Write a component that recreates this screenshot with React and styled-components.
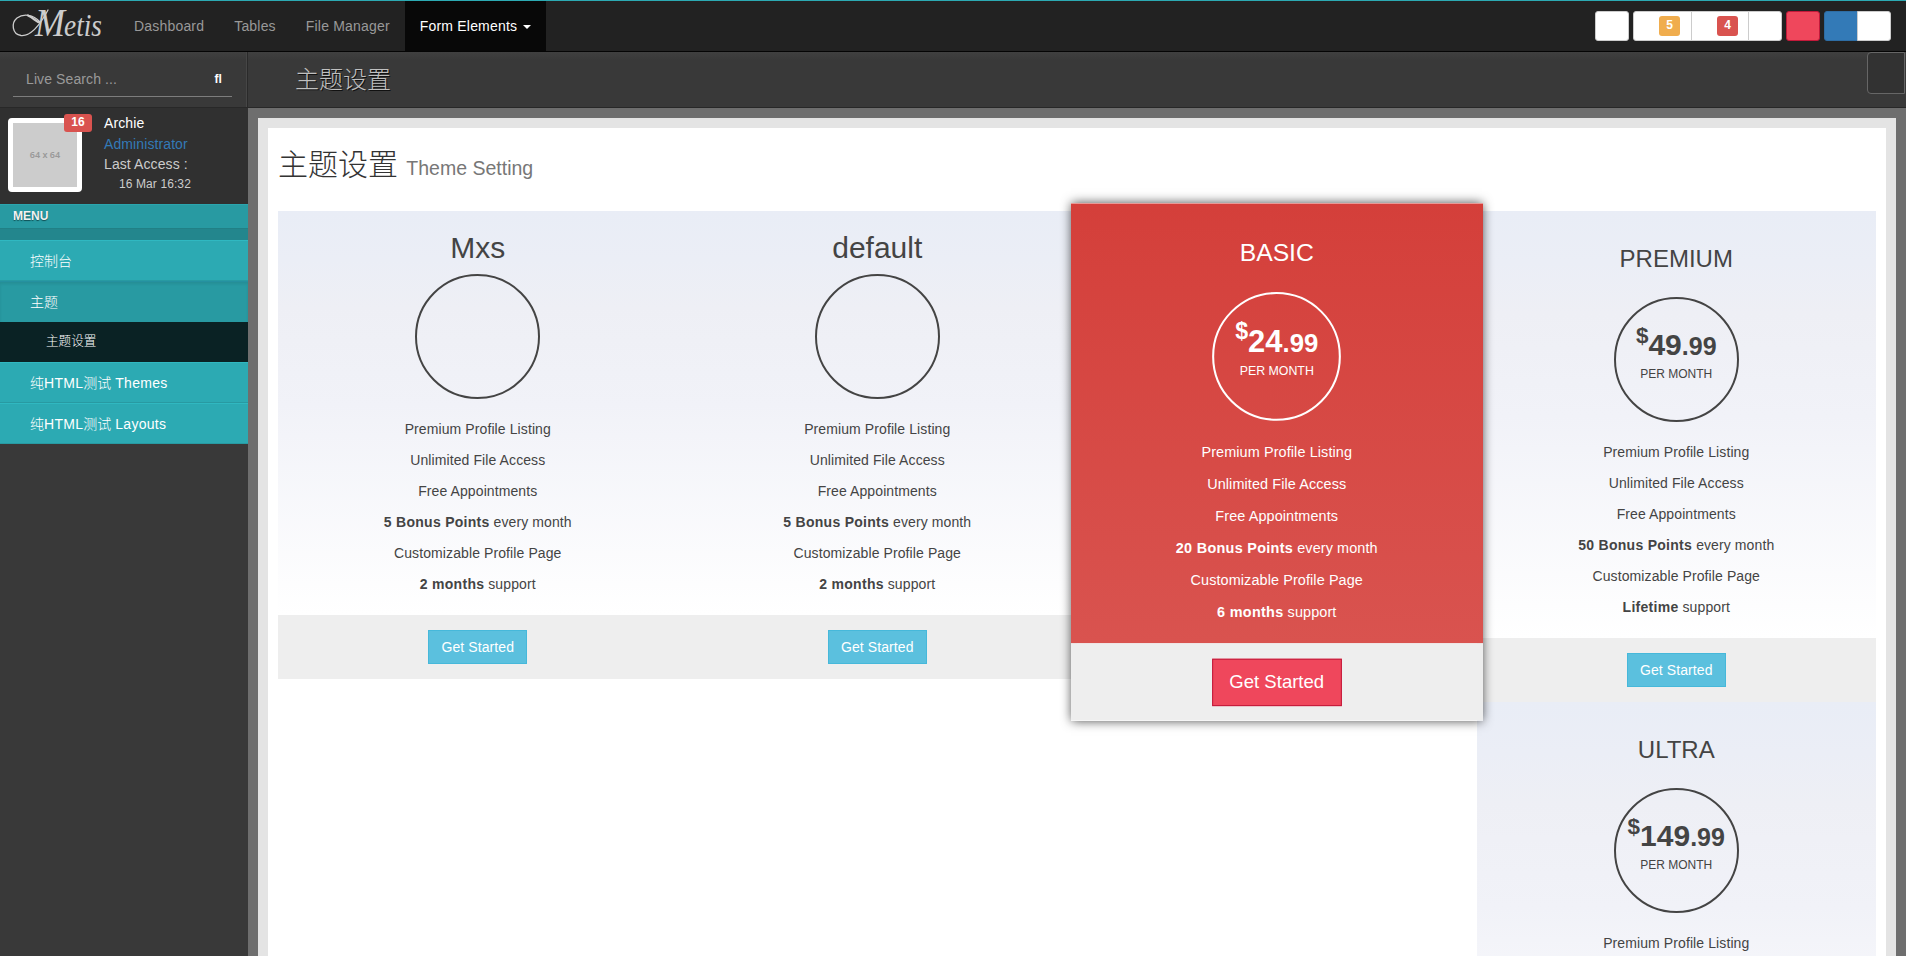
import React from "react";
import styled, { createGlobalStyle, css } from "styled-components";

const Global = createGlobalStyle`
  *, *::before, *::after { box-sizing: border-box; }
  html, body { margin: 0; background: #fff; }
  body {
    height: 956px;
    overflow: hidden;
    font: 14px/20px "Liberation Sans", Arial, "Noto Sans CJK SC", sans-serif;
    color: #444;
  }
`;

const Page = styled.div`
  width: 1906px;
  height: 956px;
  overflow: hidden;
  display: flex;
  flex-direction: column;
`;

/* ---------- top bar ---------- */
const NavBar = styled.nav`
  height: 52px;
  flex: none;
  display: flex;
  align-items: flex-start;
  background: #222;
  border-top: 1px solid #2caab3;
  border-bottom: 1px solid #050505;
`;

const Brand = styled.a`
  width: 119px;
  height: 50px;
  display: block;
`;

const NavItem = styled.a`
  height: 50px;
  padding: 15px;
  letter-spacing: 0.19px;
  white-space: nowrap;
  color: ${(p) => (p.$active ? "#fff" : "#999")};
  background: ${(p) => (p.$active ? "#080808" : "transparent")};
`;

const Caret = styled.span`
  display: inline-block;
  margin-left: 6px;
  vertical-align: middle;
  border-top: 4px solid currentColor;
  border-left: 4px solid transparent;
  border-right: 4px solid transparent;
`;

const Tools = styled.div`
  margin: 10px 15px 0 auto;
  display: flex;
  gap: 4px;
`;

const ToolGroup = styled.div`
  display: flex;
`;

const tones = {
  plain: ["#fff", "#ccc"],
  metis: ["#ef475c", "#c3193a"],
  primary: ["#337ab7", "#2e6da4"],
};

const ToolButton = styled.button`
  width: ${(p) => p.$w || 34}px;
  height: 30px;
  padding: 0;
  display: flex;
  align-items: center;
  justify-content: flex-end;
  border: 1px solid ${(p) => tones[p.$tone || "plain"][1]};
  background: ${(p) => tones[p.$tone || "plain"][0]};
  & + & { margin-left: -1px; }
  &:first-child { border-radius: 3px 0 0 3px; }
  &:last-child { border-radius: 0 3px 3px 0; }
  &:only-child { border-radius: 3px; }
`;

const Count = styled.span`
  width: 21px;
  height: 20px;
  margin-right: ${(p) => p.$gap}px;
  border-radius: 3px;
  font: bold 12px/18px "Liberation Sans", Arial, sans-serif;
  text-align: center;
  color: #fff;
  background: ${(p) => p.$color};
`;

/* ---------- header row ---------- */
const HeadRow = styled.header`
  height: 56px;
  flex: none;
  display: flex;
  align-items: flex-start;
  background: linear-gradient(#404040 0, #393939 8px, #393939 100%);
  border-bottom: 1px solid #282828;
`;

const SearchArea = styled.div`
  width: 248px;
  height: 55px;
  padding: 12px 15px 0 13px;
  border-right: 1px solid #2a2a2a;
  box-shadow: inset -1px 0 #464646;
`;

const SearchBox = styled.div`
  height: 33px;
  padding: 0 10px 0 13px;
  display: flex;
  justify-content: space-between;
  border-bottom: 1px solid #7d7d7d;
  line-height: 31px;
  letter-spacing: 0.1px;
  color: #999;
`;

const SearchGlyph = styled.span`
  font-size: 12px;
  line-height: 30px;
  font-weight: bold;
  color: #fff;
`;

const HeadTitle = styled.h3`
  margin: 0;
  padding: 15px 0 0 47px;
  font: 300 24px/26px "Liberation Sans", "Noto Sans CJK SC", sans-serif;
  color: #c0c0c0;
  text-shadow: 1px 1px 0 #111;
`;

const PanelToggle = styled.button`
  width: 38px;
  height: 42px;
  padding: 0;
  margin: 0 1px 0 auto;
  border: 1px solid #666;
  border-radius: 4px 0 0 4px;
  background: #323232;
`;

/* ---------- sidebar ---------- */
const Main = styled.div`
  flex: 1;
  min-height: 0;
  display: flex;
  background: #6e6e6e;
`;

const SideBar = styled.aside`
  width: 248px;
  flex: none;
  background: #393939;
`;

const UserPanel = styled.div`
  height: 96px;
  padding: 10px 8px 0;
  display: flex;
  gap: 22px;
  background: #303030;
`;

const Avatar = styled.div`
  position: relative;
  width: 74px;
  height: 74px;
  display: flex;
  align-items: center;
  justify-content: center;
  border: 5px solid #fff;
  border-radius: 4px;
  background: #ccc;
  font: 600 9px/12px "Noto Sans", sans-serif;
  color: #999;
`;

const AvatarBadge = styled.span`
  position: absolute;
  top: -9px;
  right: -15px;
  width: 28px;
  height: 18px;
  border-radius: 3px;
  background: #d9534f;
  font: bold 12px/16px "Liberation Sans", Arial, sans-serif;
  text-align: center;
  color: #fff;
`;

const UserInfo = styled.div`
  margin-top: -6px;
  line-height: 19px;
  letter-spacing: 0.1px;
  color: #ccc;
`;
const UserName = styled.div`
  line-height: 22px;
  color: #fff;
`;
const UserRole = styled.div`
  line-height: 21px;
  color: #337ab7;
`;
const AccessTime = styled.div`
  padding-left: 15px;
  font-size: 12px;
  line-height: 21px;
`;

const MenuHeader = styled.div`
  height: 24px;
  padding-left: 13px;
  border-top: 1px solid #2ba5ae;
  background: #289aa2;
  font-size: 12px;
  font-weight: bold;
  line-height: 22px;
  color: #f2f2f2;
  text-shadow: 0 1px 1px #0f4d51;
`;

const MenuDivider = styled.div`
  height: 12px;
  background: #23868d;
  box-shadow: inset 0 1px #218086;
`;

const menuKinds = {
  item: css`
    background: #2caab3;
    border-top: 1px solid #30b8c1;
    border-bottom: 1px solid #289aa2;
  `,
  open: css`
    background: #289aa2;
    border-top: 1px solid #2591a0;
    box-shadow: inset 0 2px 3px rgba(0, 0, 0, 0.08);
  `,
  sub: css`
    height: 40px;
    padding-left: 46px;
    font-size: 12.6px;
    line-height: 38px;
    background: #0a2224;
  `,
};

const MenuLink = styled.a`
  display: block;
  height: 41px;
  padding-left: 30px;
  font-weight: 300;
  line-height: 40px;
  white-space: nowrap;
  color: #fff;
  ${(p) => menuKinds[p.$kind || "item"]}
`;

const Latin = styled.span`
  letter-spacing: 0.3px;
`;

/* ---------- content ---------- */
const Content = styled.main`
  flex: 1;
  min-width: 0;
  margin: 10px 10px 0;
  border: solid #e4e4e4;
  border-width: 10px 10px 0;
  padding: 0 10px;
  background: #fff;
`;

const PageTitle = styled.h2`
  height: 83px;
  margin: 0;
  padding-top: 18px;
  font: 300 30px/38px "Liberation Sans", "Noto Sans CJK SC", sans-serif;
  color: #333;
`;

const TitleNote = styled.small`
  font-size: 19.5px;
  font-weight: 400;
  color: #777;
`;

const Plans = styled.section`
  display: grid;
  grid-template-columns: repeat(4, 1fr);
  align-items: start;
`;

const PlanColumn = styled.div`
  display: flex;
  flex-direction: column;
`;

const PlanCard = styled.article`
  text-align: center;
  color: ${(p) => (p.$featured ? "#fff" : "#444")};
  ${(p) =>
    p.$featured &&
    css`
      z-index: 1;
      transform: scale(1.03);
      box-shadow: 0 0 10px rgba(0, 0, 0, 0.7);
    `}
`;

const PlanBody = styled.div`
  padding: ${(p) => (p.$tall ? "35px" : "20px")} 0 15px;
  background: ${(p) =>
    p.$featured
      ? "linear-gradient(#d43f3a, #d9534f)"
      : "linear-gradient(#e9edf6 0, #ebeef6 12%, #eeeff5 24%, #f1f2f8 48%, #fff 100%)"};
`;

const ThemeName = styled.h2`
  margin: 0 0 10px;
  font-size: 30px;
  line-height: 33px;
  font-weight: 400;
`;

const PlanName = styled.h3`
  margin: 0 0 25px;
  font-size: 24px;
  line-height: 26px;
  font-weight: 400;
  text-transform: uppercase;
`;

const PriceCircle = styled.div`
  width: 125px;
  height: 125px;
  margin: 0 auto 15px;
  padding-top: 28.5px;
  border: 2px solid currentColor;
  border-radius: 50%;
`;

const Price = styled.div`
  margin-bottom: 3px;
  font-size: 30px;
  line-height: 33px;
  font-weight: bold;
  white-space: nowrap;
`;
const Currency = styled.sup`
  position: relative;
  top: -0.5em;
  font-size: 22.5px;
  line-height: 0;
  vertical-align: baseline;
`;
const Cents = styled.small`
  font-size: 25px;
`;
const Period = styled.div`
  font-size: 12px;
  line-height: 17px;
`;

const Features = styled.ul`
  margin: 0;
  padding: 0;
  list-style: none;
`;
const Feature = styled.li`
  height: 31px;
  line-height: 31px;
  letter-spacing: 0.1px;

  strong {
    letter-spacing: 0.28px;
  }
`;

const PlanFooter = styled.div`
  padding: ${(p) => (p.$featured ? "14.5px" : "15px")} 0;
  display: flex;
  justify-content: center;
  background: #eee;
`;

const StartButton = styled.button`
  border: 1px solid #46b8da;
  padding: 6px 12px;
  background: #5bc0de;
  font: 14px/20px "Liberation Sans", Arial, sans-serif;
  letter-spacing: 0.1px;
  color: #fff;
  ${(p) =>
    p.$featured &&
    css`
      padding: 9px 16px 11px;
      border-color: #c3193a;
      background: #ef475c;
      font-size: 18px;
      line-height: 24px;
      letter-spacing: 0;
    `}
`;

function Plan({ theme, name, amount, bonus, support, featured }) {
  return (
    <PlanCard $featured={featured}>
      <PlanBody $featured={featured} $tall={!theme}>
        {theme ? <ThemeName>{theme}</ThemeName> : <PlanName>{name}</PlanName>}
        <PriceCircle>
          {amount && (
            <>
              <Price>
                <Currency>$</Currency>
                {amount}
                <Cents>.99</Cents>
              </Price>
              <Period>PER MONTH</Period>
            </>
          )}
        </PriceCircle>
        <Features>
          <Feature>Premium Profile Listing</Feature>
          <Feature>Unlimited File Access</Feature>
          <Feature>Free Appointments</Feature>
          <Feature>
            <strong>{bonus} Bonus Points</strong> every month
          </Feature>
          <Feature>Customizable Profile Page</Feature>
          <Feature>
            <strong>{support}</strong> support
          </Feature>
        </Features>
      </PlanBody>
      <PlanFooter $featured={featured}>
        <StartButton $featured={featured}>Get Started</StartButton>
      </PlanFooter>
    </PlanCard>
  );
}

function Logo() {
  return (
    <svg width="119" height="50" viewBox="0 0 119 50" aria-label="Metis">
      <g fill="none" stroke="#ccc" strokeLinecap="round">
        <path
          d="M40 21 C33 13 23 12.500 17 17 C11 22 12 33 21 34.500 C31 35.500 40 24 48 9"
          strokeWidth="1.3"
        />
        <path d="M28 14.500 C34 17 36 21 40 21.500" strokeWidth="2.200" />
      </g>
      <text
        y="35"
        fill="#ccc"
        fontFamily="Liberation Serif, serif"
        fontStyle="italic"
      >
        <tspan x="35" fontSize="39" textLength="30" lengthAdjust="spacingAndGlyphs">
          M
        </tspan>
        <tspan x="64" fontSize="31" textLength="38" lengthAdjust="spacingAndGlyphs">
          etis
        </tspan>
      </text>
    </svg>
  );
}

export default function App() {
  return (
    <Page>
      <Global />
      <NavBar>
        <Brand>
          <Logo />
        </Brand>
        <NavItem>Dashboard</NavItem>
        <NavItem>Tables</NavItem>
        <NavItem>File Manager</NavItem>
        <NavItem $active>
          Form Elements
          <Caret />
        </NavItem>
        <Tools>
          <ToolGroup>
            <ToolButton />
          </ToolGroup>
          <ToolGroup>
            <ToolButton $w={59}>
              <Count $color="#f0ad4e" $gap={11}>5</Count>
            </ToolButton>
            <ToolButton $w={58}>
              <Count $color="#d9534f" $gap={10}>4</Count>
            </ToolButton>
            <ToolButton />
          </ToolGroup>
          <ToolGroup>
            <ToolButton $tone="metis" />
          </ToolGroup>
          <ToolGroup>
            <ToolButton $tone="primary" />
            <ToolButton />
          </ToolGroup>
        </Tools>
      </NavBar>
      <HeadRow>
        <SearchArea>
          <SearchBox>
            Live Search ...
            <SearchGlyph>ﬂ</SearchGlyph>
          </SearchBox>
        </SearchArea>
        <HeadTitle>主题设置</HeadTitle>
        <PanelToggle />
      </HeadRow>
      <Main>
        <SideBar>
          <UserPanel>
            <Avatar>
              64 x 64
              <AvatarBadge>16</AvatarBadge>
            </Avatar>
            <UserInfo>
              <UserName>Archie</UserName>
              <UserRole>Administrator</UserRole>
              <div>Last Access :</div>
              <AccessTime>16 Mar 16:32</AccessTime>
            </UserInfo>
          </UserPanel>
          <MenuHeader>MENU</MenuHeader>
          <MenuDivider />
          <MenuLink>控制台</MenuLink>
          <MenuLink $kind="open">主题</MenuLink>
          <MenuLink $kind="sub">主题设置</MenuLink>
          <MenuLink>
            纯<Latin>HTML</Latin>测试 <Latin>Themes</Latin>
          </MenuLink>
          <MenuLink>
            纯<Latin>HTML</Latin>测试 <Latin>Layouts</Latin>
          </MenuLink>
        </SideBar>
        <Content>
          <PageTitle>
            主题设置 <TitleNote>Theme Setting</TitleNote>
          </PageTitle>
          <Plans>
            <Plan theme="Mxs" bonus="5" support="2 months" />
            <Plan theme="default" bonus="5" support="2 months" />
            <Plan name="Basic" amount="24" bonus="20" support="6 months" featured />
            <PlanColumn>
              <Plan name="Premium" amount="49" bonus="50" support="Lifetime" />
              <Plan name="Ultra" amount="149" bonus="100" support="Lifetime" />
            </PlanColumn>
          </Plans>
        </Content>
      </Main>
    </Page>
  );
}
